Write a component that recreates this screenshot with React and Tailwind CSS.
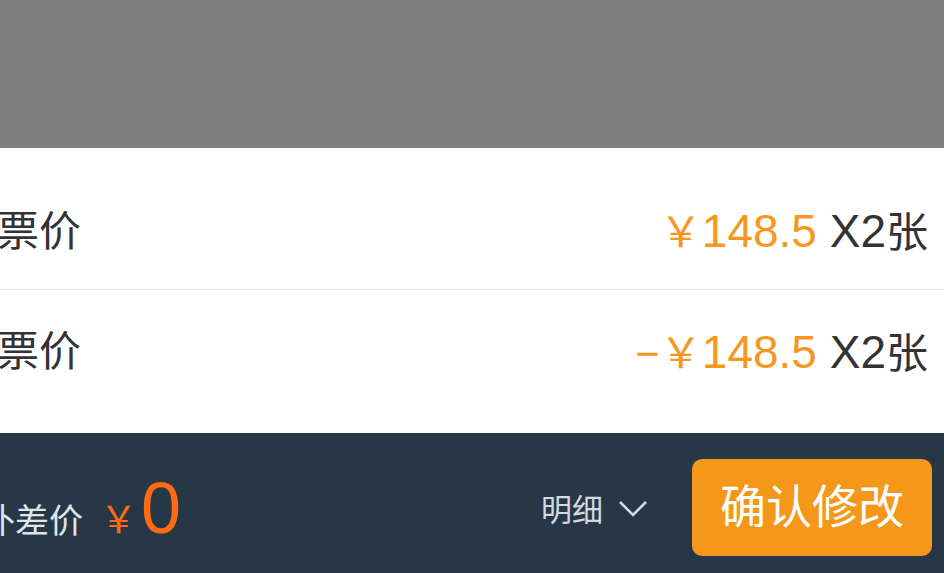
export default function App() {
  const font = { fontFamily: '"Liberation Sans", "Noto Sans CJK SC", sans-serif' };
  const Price = ({ neg }) => (
    <span className="leading-none whitespace-pre flex items-baseline">
      <span className="text-[#f7971f] text-[42px]">{neg ? "−" : ""}￥</span>
      <span className="text-[#f7971f] text-[46px]">148.5 </span>
      <span className="text-[#333333] text-[46px]">X2</span>
      <span className="text-[#333333] text-[42px]">张</span>
    </span>
  );
  return (
    <div className="w-[944px] h-[573px] overflow-hidden flex flex-col" style={font}>
      <div className="h-[148px] bg-[#7f7f7f]" />
      <div className="bg-white flex flex-col pt-[24px] pb-[20px]">
        <div className="h-[118px] flex items-center justify-between pr-[16px] border-b border-[#e8e8e8]">
          <span className="text-[42px] text-[#333333] -ml-[3px] leading-none mt-[2px]">票价</span>
          <Price />
        </div>
        <div className="h-[123px] flex items-center justify-between pr-[16px]">
          <span className="text-[42px] text-[#333333] -ml-[3px] leading-none">票价</span>
          <Price neg />
        </div>
      </div>
      <div className="flex-1 bg-[#283746] flex items-center justify-between pr-[12px] pt-[8px]">
        <div className="flex items-baseline -ml-[19px] mt-[2px]">
          <span className="text-[34px] text-[#dfe5ec] leading-none">补差价</span>
          <span className="text-[37px] text-[#ff6a12] leading-none ml-[17px]">￥</span>
          <span className="text-[72px] text-[#ff6a12] leading-none ml-[4px]">0</span>
        </div>
        <div className="flex items-center">
          <span className="text-[31px] text-[#d3d9e0] leading-none mt-[6px]">明细</span>
          <svg width="30" height="20" viewBox="0 0 30 20" className="ml-[15px] mr-[44px] mt-[4px]" fill="none">
            <path d="M2 3 L15 16 L28 3" stroke="#d3d9e0" strokeWidth="2.6" />
          </svg>
          <button className="w-[240px] h-[97px] rounded-[10px] bg-[#f5971a] text-white text-[46px] leading-none flex items-center justify-center">
            确认修改
          </button>
        </div>
      </div>
    </div>
  );
}
